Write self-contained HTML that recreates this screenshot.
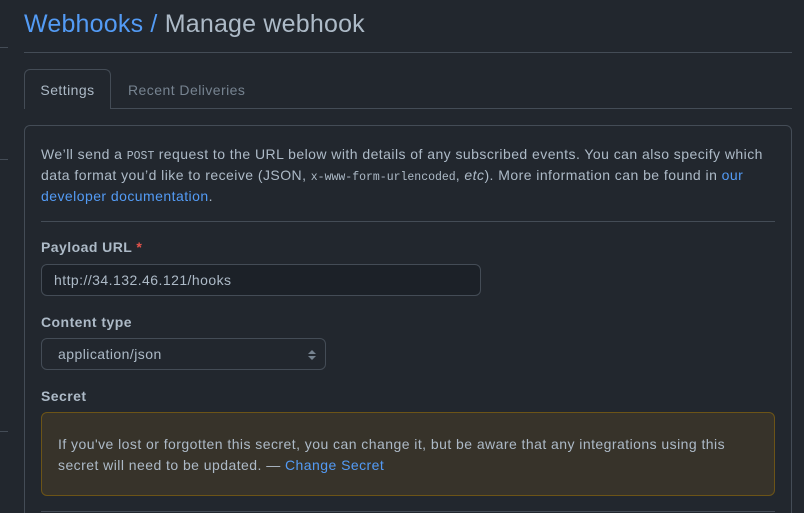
<!DOCTYPE html>
<html><head><style>
*{margin:0;padding:0;box-sizing:border-box}
html{overflow:hidden;height:513px}
body{width:804px;height:513px;overflow:hidden;background:#22272e;font-family:"Liberation Sans",sans-serif;color:#adbac7;position:relative;font-size:14px;letter-spacing:0.45px}
.a{position:absolute}
.ln{position:absolute;background:#444c56;height:1px}
code{font-family:"Liberation Mono",monospace;font-size:11.5px;letter-spacing:0;line-height:0}
a{color:#539bf5;text-decoration:none}
</style></head><body>
<div class="ln" style="left:0;top:47px;width:8px"></div>
<div class="ln" style="left:0;top:159px;width:8px"></div>
<div class="ln" style="left:0;top:431px;width:8px"></div>
<div class="a" style="left:24px;top:10px;font-size:25px;color:#adbac7;white-space:nowrap;letter-spacing:0.2px"><span style="color:#539bf5">Webhooks /</span> Manage webhook</div>
<div class="ln" style="left:24px;top:52px;width:768px"></div>
<div class="ln" style="left:24px;top:108px;width:768px"></div>
<div class="a" style="left:24px;top:69px;width:87px;height:40px;border:1px solid #444c56;border-bottom:none;border-radius:6px 6px 0 0;background:#22272e;color:#adbac7;padding-top:12px;text-align:center">Settings</div>
<div class="a" style="left:128px;top:82px;color:#768390">Recent Deliveries</div>
<div class="a" style="left:24px;top:125px;width:768px;height:395px;border:1px solid #444c56;border-radius:6px"></div>
<div class="a" style="left:41px;top:144px;width:735px;line-height:21px">We’ll send a <code>POST</code> request to the URL below with details of any subscribed events. You can also specify which data format you’d like to receive (JSON, <code>x-www-form-urlencoded</code>, <i>etc</i>). More information can be found in <a>our developer documentation</a>.</div>
<div class="ln" style="left:41px;top:221px;width:734px"></div>
<div class="a" style="left:41px;top:239px;font-weight:bold">Payload URL <span style="color:#e5534b">*</span></div>
<div class="a" style="left:41px;top:264px;width:440px;height:32px;border:1px solid #444c56;border-radius:6px;background:#1c2128;padding:7px 12px;color:#adbac7">http://34.132.46.121/hooks</div>
<div class="a" style="left:41px;top:314px;font-weight:bold">Content type</div>
<div class="a" style="left:41px;top:338px;width:285px;height:32px;border:1px solid #444c56;border-radius:6px;background:#22272e;padding:7px 16px">application/json
<svg class="a" style="left:265px;top:10px" width="10" height="12" viewBox="0 0 10 12"><path d="M1 5L5 1L9 5Z M1 7L5 11L9 7Z" fill="#768390"/></svg></div>
<div class="a" style="left:41px;top:388px;font-weight:bold">Secret</div>
<div class="a" style="left:41px;top:412px;width:734px;height:84px;border:1px solid #6c5417;border-radius:6px;background:#37332a;padding:21px 16px;line-height:21px">If you've lost or forgotten this secret, you can change it, but be aware that any integrations using this secret will need to be updated. — <a>Change Secret</a></div>
<div class="ln" style="left:41px;top:511px;width:734px"></div>
</body></html>
